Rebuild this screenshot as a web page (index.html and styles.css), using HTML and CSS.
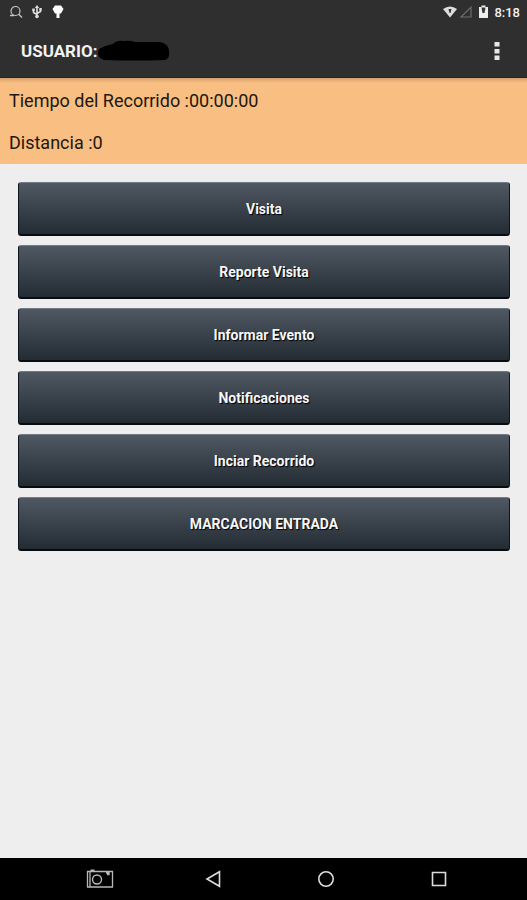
FILE: index.html
```html
<!DOCTYPE html>
<html lang="es">
<head>
<meta charset="utf-8">
<meta name="viewport" content="width=device-width, initial-scale=1">
<title>Recorrido</title>
<link rel="stylesheet" href="styles.css">
</head>
<body>
<header class="top">
  <div class="status">
    <svg class="status-icon" viewBox="0 0 14 14" aria-hidden="true"><circle cx="6.500" cy="6" r="4.500" fill="none" stroke="#c8c8c8" stroke-width="1.200"/><path d="M9.700 9.200l3.300 3.300M1 10.500h4" fill="none" stroke="#c8c8c8" stroke-width="1.300"/></svg>
    <svg class="status-icon" viewBox="0 0 14 14" aria-hidden="true"><path d="M7 2v9M3.500 4.500v3L7 9.500M10.500 4v2.500L7 8.500" fill="none" stroke="#e0e0e0" stroke-width="1.600"/><path d="M7 0l2.200 3H4.800z" fill="#e0e0e0"/><path d="M2.300 3.500h2.400v2.400H2.300zM9.300 3h2.400v2.400H9.300z" fill="#e0e0e0"/><circle cx="7" cy="11.500" r="1.800" fill="#e0e0e0"/></svg>
    <svg class="status-icon" viewBox="0 0 14 14" aria-hidden="true"><path d="M4 .5h6l2.500 3.500L10 8.500H8.500V13h-3V8.500H4L1.500 4z" fill="#fff"/></svg>
    <span class="space"></span>
    <svg class="status-icon" viewBox="0 0 14 14" aria-hidden="true"><path d="M0 4Q7-1 14 4L7 12.500z" fill="#ddd"/><path d="M5.500 4h3L7.500 8h-1z" fill="#333"/></svg>
    <svg class="status-icon signal" viewBox="0 0 14 14" aria-hidden="true"><path d="M12 2v10H2z" fill="none" stroke="#707070" stroke-width="1.100"/></svg>
    <svg class="status-icon" viewBox="0 0 14 14" aria-hidden="true"><path d="M2 2h2.500V.5h4V2H11v11H2z" fill="#eee"/><path d="M4.500 2.500h4L7.500 8h-2z" fill="#333"/></svg>
    <time class="clock">8:18</time>
  </div>
  <div class="bar">
    <h1 class="title">USUARIO:</h1>
    <svg class="redaction" viewBox="0 0 72 22" aria-hidden="true"><path d="M1 9Q8 5 15 4 19 0 25 1q7-1 12 1 13 0 25 0 9 2 9 9 1 8-4 9-30 1-61 0Q0 18 0 13z" fill="#000"/></svg>
    <button class="more" type="button" aria-label="Más opciones"><svg class="dots" viewBox="0 0 6 20" aria-hidden="true"><path d="M.5 1h5v4.500h-5zM.5 8h5v4.500h-5zM.5 14.500h5V19h-5z" fill="#e8e8e8"/></svg></button>
  </div>
</header>
<section class="summary">
  <p class="line">Tiempo del Recorrido :00:00:00</p>
  <p class="line">Distancia :0</p>
</section>
<main class="menu">
  <button class="action" type="button">Visita</button>
  <button class="action" type="button">Reporte Visita</button>
  <button class="action" type="button">Informar Evento</button>
  <button class="action" type="button">Notificaciones</button>
  <button class="action" type="button">Inciar Recorrido</button>
  <button class="action" type="button">MARCACION ENTRADA</button>
</main>
<nav class="system">
  <button class="key" type="button" aria-label="Captura"><svg class="camera" viewBox="0 0 28 20" aria-hidden="true"><path d="M1.500 2.500h25v15.500h-25zM4 2.500V18M4.500 1.200h4M20 4h3v1.500h-2" fill="none" stroke="#b8b8b8" stroke-width="1.300"/><circle cx="11" cy="10.500" r="4.500" fill="none" stroke="#b8b8b8" stroke-width="1.400"/></svg></button>
  <button class="key" type="button" aria-label="Atrás"><svg class="glyph" viewBox="0 0 18 18" aria-hidden="true"><path d="M15.500 1.700v14.600L3 9z" fill="none" stroke="#ddd" stroke-width="1.600"/></svg></button>
  <button class="key" type="button" aria-label="Inicio"><svg class="glyph" viewBox="0 0 18 18" aria-hidden="true"><circle cx="9" cy="9" r="7.200" fill="none" stroke="#ddd" stroke-width="1.600"/></svg></button>
  <button class="key" type="button" aria-label="Recientes"><svg class="glyph" viewBox="0 0 18 18" aria-hidden="true"><path d="M2.500 2.500h13v13h-13z" fill="none" stroke="#ddd" stroke-width="1.600"/></svg></button>
</nav>
</body>
</html>
```

FILE: styles.css
```css
* {
  box-sizing: border-box;
}

body {
  margin: 0;
  min-height: 100vh;
  display: flex;
  flex-direction: column;
  background: #eeeeee;
  font-family: Roboto, "Liberation Sans", sans-serif;
}

button {
  margin: 0;
  padding: 0;
  border: 0;
  background: none;
  font-family: inherit;
}

svg {
  display: block;
}

.top {
  background: #2f2f2f;
  color: #f2f2f2;
  border-bottom: 1px solid #202626;
}

.status {
  display: flex;
  align-items: center;
  gap: 7px;
  height: 24px;
  padding: 0 7px 0 9px;
}

.status-icon {
  width: 14px;
  height: 14px;
}

.signal {
  margin: 0 -3px 0 -5px;
}

.space {
  flex: 1;
}

.clock {
  margin-left: -4px;
  font-size: 13px;
  font-weight: 500;
}

.bar {
  display: flex;
  align-items: center;
  height: 53px;
  padding: 0 19px 0 21px;
}

.title {
  margin: 0;
  font-size: 17px;
  line-height: 24px;
  font-weight: 700;
}

.redaction {
  width: 72px;
  height: 22px;
}

.more {
  margin-left: auto;
  padding: 8px;
  color: inherit;
}

.dots {
  width: 6px;
  height: 20px;
}

.summary {
  padding: 2px 9px 0;
  background: linear-gradient(#d3a270, #f9be81 5px);
  color: #20180f;
}

.line {
  margin: 0;
  font-size: 18px;
  line-height: 42px;
}

.menu {
  flex: 1;
  display: flex;
  flex-direction: column;
  gap: 9px;
  padding: 18px 17px 18px 18px;
}

.action {
  height: 54px;
  border: 1px solid #10151b;
  border-top-color: #737b84;
  border-bottom: 2px solid #080b0f;
  border-radius: 3px;
  background: linear-gradient(#505863, #232b33);
  color: #f5f7fa;
  font-size: 14px;
  font-weight: 700;
  text-shadow: 1px 1px 1px #000;
}

.system {
  display: grid;
  grid-template-columns: repeat(4, 1fr);
  height: 42px;
  padding: 0 32px 0 44px;
  background: #000;
}

.key {
  display: flex;
  align-items: center;
  justify-content: center;
}

.camera {
  width: 28px;
  height: 20px;
}

.glyph {
  width: 18px;
  height: 18px;
}
```
